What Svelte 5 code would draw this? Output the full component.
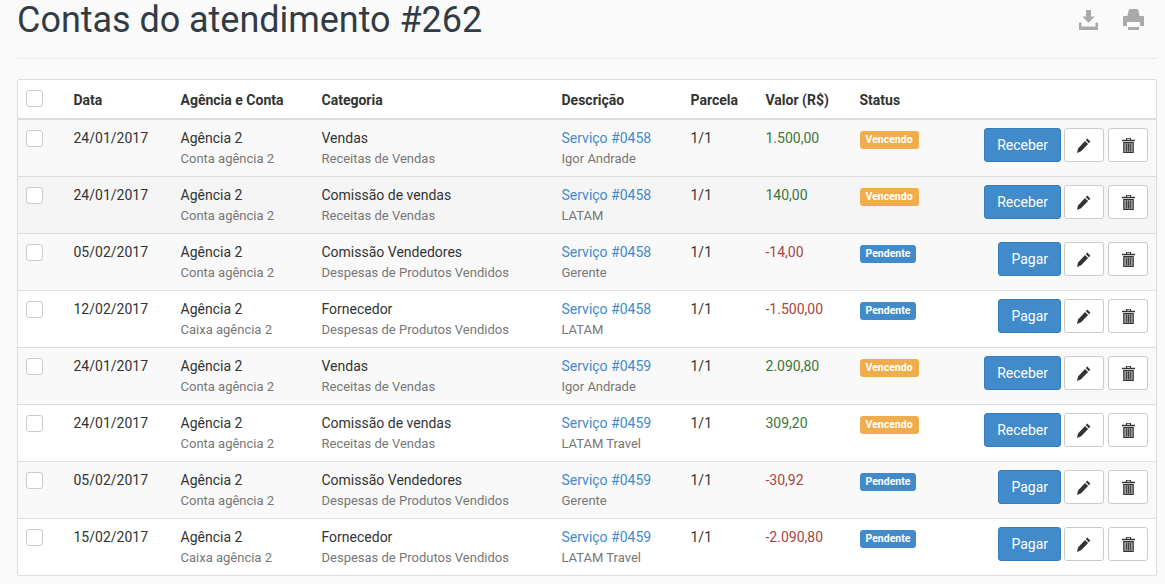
<script lang="ts">
  type Row = {
    date: string;
    account: string;
    category: string;
    group: string;
    service: string;
    client: string;
    value: string;
  };

  const rows: Row[] = [
    { date: '24/01/2017', account: 'Conta agência 2', category: 'Vendas', group: 'Receitas de Vendas', service: 'Serviço #0458', client: 'Igor Andrade', value: '1.500,00' },
    { date: '24/01/2017', account: 'Conta agência 2', category: 'Comissão de vendas', group: 'Receitas de Vendas', service: 'Serviço #0458', client: 'LATAM', value: '140,00' },
    { date: '05/02/2017', account: 'Conta agência 2', category: 'Comissão Vendedores', group: 'Despesas de Produtos Vendidos', service: 'Serviço #0458', client: 'Gerente', value: '-14,00' },
    { date: '12/02/2017', account: 'Caixa agência 2', category: 'Fornecedor', group: 'Despesas de Produtos Vendidos', service: 'Serviço #0458', client: 'LATAM', value: '-1.500,00' },
    { date: '24/01/2017', account: 'Conta agência 2', category: 'Vendas', group: 'Receitas de Vendas', service: 'Serviço #0459', client: 'Igor Andrade', value: '2.090,80' },
    { date: '24/01/2017', account: 'Conta agência 2', category: 'Comissão de vendas', group: 'Receitas de Vendas', service: 'Serviço #0459', client: 'LATAM Travel', value: '309,20' },
    { date: '05/02/2017', account: 'Conta agência 2', category: 'Comissão Vendedores', group: 'Despesas de Produtos Vendidos', service: 'Serviço #0459', client: 'Gerente', value: '-30,92' },
    { date: '15/02/2017', account: 'Caixa agência 2', category: 'Fornecedor', group: 'Despesas de Produtos Vendidos', service: 'Serviço #0459', client: 'LATAM Travel', value: '-2.090,80' },
  ];

  const isExpense = (r: Row) => r.value.startsWith('-');
  // the second row is under the mouse in the reference
  const hoveredRow = 1;
</script>

<div class="page">
  <header class="head">
    <h1>Contas do atendimento #262</h1>
    <div class="tools">
      <svg class="save" width="19" height="20" viewBox="0 0 19 20" aria-label="Baixar">
        <path d="M7 0h5v6.500h3.500L9.500 13 3.500 6.500H7zM0 12.500h2.500v4h14v-4H19V20H0z" />
      </svg>
      <svg width="21" height="21" viewBox="0 0 21 21" aria-label="Imprimir">
        <path d="M5.500 2c0-1 .8-2 2-2h6c1.200 0 2 1 2 2l1 5H4.500zM0 8c0-.6.5-1 1-1h19c.5 0 1 .4 1 1v9h-4v-4H4v4H0zM5 18h11v3H5z" />
      </svg>
    </div>
  </header>

  <div class="panel">
    <table>
      <colgroup>
        <col style="width: 47.5px" />
        <col style="width: 107px" />
        <col style="width: 141px" />
        <col style="width: 240px" />
        <col style="width: 129px" />
        <col style="width: 75px" />
        <col style="width: 94px" />
        <col style="width: 100px" />
        <col />
      </colgroup>
      <thead>
        <tr>
          <th><span class="check"></span></th>
          <th>Data</th>
          <th>Agência e Conta</th>
          <th>Categoria</th>
          <th>Descrição</th>
          <th>Parcela</th>
          <th>Valor (R$)</th>
          <th>Status</th>
          <th></th>
        </tr>
      </thead>
      <tbody>
        {#each rows as row, i}
          <tr class:hover={i === hoveredRow}>
            <td><span class="check"></span></td>
            <td>{row.date}</td>
            <td>Agência 2<small>{row.account}</small></td>
            <td>{row.category}<small>{row.group}</small></td>
            <td><span class="link">{row.service}</span><small>{row.client}</small></td>
            <td>1/1</td>
            <td class:expense={isExpense(row)} class:income={!isExpense(row)}>{row.value}</td>
            <td>
              <span class="badge" class:warn={!isExpense(row)}>{isExpense(row) ? 'Pendente' : 'Vencendo'}</span>
            </td>
            <td>
              <div class="actions">
                <button class="btn primary">{isExpense(row) ? 'Pagar' : 'Receber'}</button>
                <button class="btn icon" aria-label="Editar">
                  <svg width="14" height="15" viewBox="0 0 14 15">
                    <path d="M10.300.6l3.100 3.100-1.500 1.500-3.100-3.100zM8 2.900l3.100 3.100-7 7.300L0 15l1-4.500z" />
                  </svg>
                </button>
                <button class="btn icon" aria-label="Excluir">
                  <svg width="13" height="15" viewBox="0 0 13 15">
                    <rect class="inner" x="2" y="5" width="9" height="9" />
                    <path d="M4 0h5v1.800h4v1.400H0V1.800h4zM5 .8v1h3v-1zM1.200 4h10.600v11H1.200zM2.300 5v9h8.400V5zM4.200 5.500h.9v8h-.9zM6.050 5.500h.9v8h-.9zM7.900 5.500h.9v8h-.9z" fill-rule="evenodd" />
                  </svg>
                </button>
              </div>
            </td>
          </tr>
        {/each}
      </tbody>
    </table>
  </div>
</div>

<style>
  :global(body) {
    background: #fafafa;
    color: #333;
    font-family: Roboto, "Liberation Sans", sans-serif;
    font-size: 14px;
    line-height: 20px;
  }

  .page {
    padding: 0 8px 0 17px;
  }

  .head {
    display: flex;
    justify-content: space-between;
    height: 58px;
    border-bottom: 1px solid #eee;
  }

  h1 {
    margin: 0;
    font-size: 36px;
    font-weight: 400;
    line-height: 40px;
    letter-spacing: -0.04px;
    color: #333c44;
  }

  .tools {
    display: flex;
    gap: 25px;
    padding: 9px 13px 0 0;
  }

  .tools svg {
    fill: #aaa;
  }

  .tools .save {
    margin-top: 1px;
  }

  .panel {
    margin-top: 20px;
    background: #fff;
    border: 1px solid #ddd;
    border-radius: 2px;
  }

  table {
    width: 100%;
    border-collapse: collapse;
    table-layout: fixed;
  }

  th {
    box-sizing: border-box;
    height: 39px;
    padding: 2px 8px 0;
    text-align: left;
    font-weight: 700;
    border-bottom: 2px solid #ddd;
  }

  td {
    padding: 8px;
    vertical-align: top;
    border-top: 1px solid #ddd;
  }

  tbody tr:first-child td {
    border-top: 0;
  }

  tbody tr:nth-child(odd) {
    background: #f9f9f9;
  }

  tbody tr.hover {
    background: #f5f5f5;
  }

  small {
    display: block;
    margin-top: 1px;
    margin-bottom: -1px;
    font-size: 13px;
    color: #777;
  }

  .link {
    color: #428bca;
  }

  .income {
    color: #3c763d;
  }

  .expense {
    color: #a94442;
  }

  .check {
    display: block;
    box-sizing: border-box;
    width: 17px;
    height: 17px;
    margin-top: 2px;
    background: #fff;
    border: 1px solid #ccc;
    border-radius: 3px;
  }

  th .check {
    margin-top: -3px;
  }

  .badge {
    display: inline-block;
    margin-top: 3px;
    padding: 0 6px;
    height: 18px;
    font-size: 10.5px;
    font-weight: 700;
    line-height: 17px;
    color: #fff;
    background: #428bca;
    border-radius: 3px;
    vertical-align: top;
  }

  .badge.warn {
    background: #f0ad4e;
  }

  .actions {
    display: flex;
    justify-content: flex-end;
    gap: 3px;
  }

  .btn {
    box-sizing: border-box;
    height: 34px;
    padding: 6px 12px;
    font: inherit;
    border: 1px solid #ccc;
    border-radius: 3px;
    background: #fff;
  }

  .btn.primary {
    color: #fff;
    background: #428bca;
    border-color: #357ebd;
  }

  .btn.icon {
    display: flex;
    flex: none;
    align-items: center;
    justify-content: center;
    width: 40px;
    padding: 0;
  }

  .btn.icon + .btn.icon {
    margin-left: 1px;
  }

  .btn.icon svg {
    fill: #333;
  }

  .btn.icon .inner {
    fill: #999;
  }
</style>
